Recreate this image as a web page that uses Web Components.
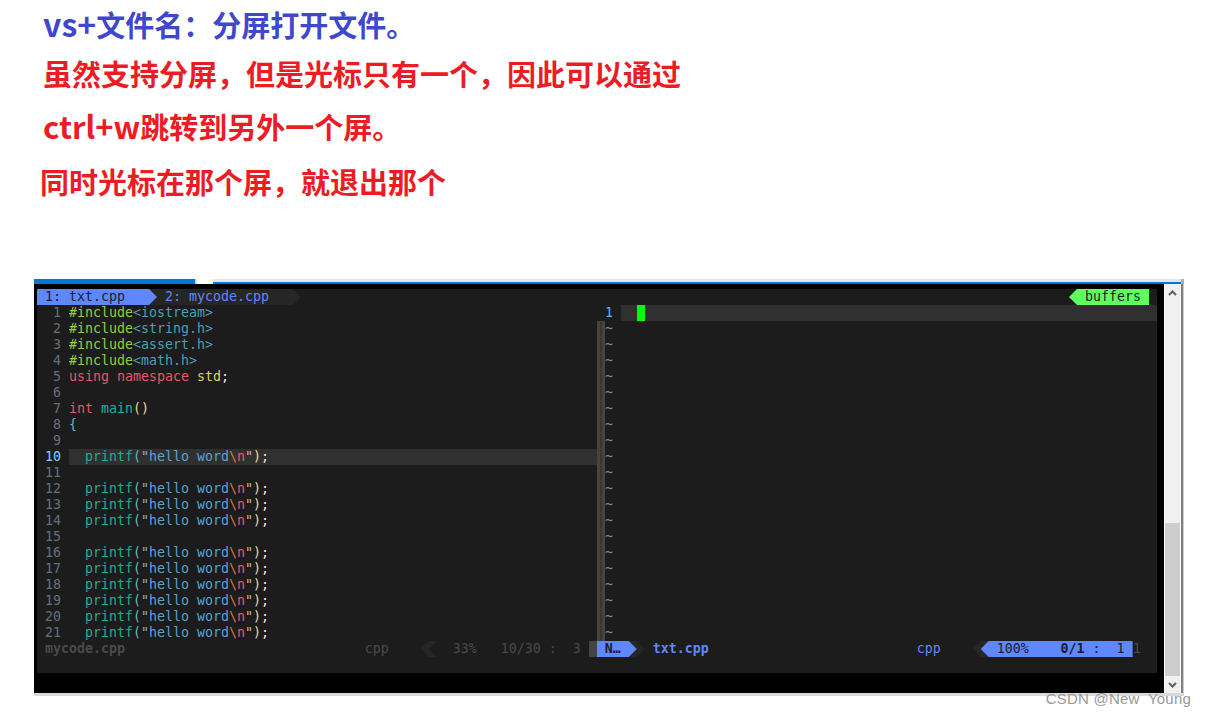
<!DOCTYPE html>
<html lang="zh">
<head>
<meta charset="utf-8">
<title>vs split</title>
<style>
  html, body { margin: 0; padding: 0; background: #fff; overflow: hidden; }
  body { height: 718px; font-family: "Noto Sans CJK SC", "Liberation Sans", sans-serif; }
  .notes { display: block; height: 279px; }
  .wide { font-size: 32px; line-height: 1; }
  .semiwide { font-size: 31px; line-height: 1; }
</style>
</head>
<body>
<div class="notes">
  <note-line tone="blue" h="46" inset="43"><span class="wide">vs+</span>文件名：分屏打开文件。</note-line>
  <note-line tone="red" h="54" inset="43">虽然支持分屏，但是光标只有一个，因此可以通过</note-line>
  <note-line tone="red" h="50" inset="43"><span class="semiwide">ctrl+w</span>跳转到另外一个屏。</note-line>
  <note-line tone="red" h="62" inset="40">同时光标在那个屏，就退出那个</note-line>
</div>
<term-window>
  <vim-tabline></vim-tabline>
  <vim-editor></vim-editor>
  <vim-status></vim-status>
</term-window>
<csdn-mark>CSDN @New  Young</csdn-mark>

<script>
class NoteLine extends HTMLElement {
  connectedCallback() {
    if (this.shadowRoot) return;
    this.attachShadow({ mode: 'open' });
    const color = this.getAttribute('tone') === 'blue' ? '#3f48cc' : '#ed1c24';
    this.shadowRoot.innerHTML = `
      <style>
        :host {
          display: flex;
          align-items: center;
          height: ${this.getAttribute('h')}px;
          padding-left: ${this.getAttribute('inset')}px;
          color: ${color};
          font: 700 29px/1 "Noto Sans CJK SC", "Liberation Sans", sans-serif;
          white-space: nowrap;
        }
      </style>
      <div><slot></slot></div>
    `;
  }
}

class WinScrollbar extends HTMLElement {
  connectedCallback() {
    if (this.shadowRoot) return;
    this.attachShadow({ mode: 'open' });
    this.shadowRoot.innerHTML = `
      <style>
        :host {
          display: flex;
          flex-direction: column;
          width: 15px;
          background: #f0f0f0;
          margin-left: 1px;
        }
        .btn { height: 17px; display: flex; align-items: center; justify-content: center; }
        .track { flex: 1; }
        .thumb { height: 153px; background: #cdcdcd; }
        svg { display: block; }
      </style>
      <div class="btn"><svg width="9" height="6" viewBox="0 0 9 6"><path d="M1 5 4.5 1.5 8 5" fill="none" stroke="#606060" stroke-width="2"/></svg></div>
      <div class="track"></div>
      <div class="thumb"></div>
      <div class="btn"><svg width="9" height="6" viewBox="0 0 9 6"><path d="M1 1 4.5 4.5 8 1" fill="none" stroke="#606060" stroke-width="2"/></svg></div>
    `;
  }
}

class TermWindow extends HTMLElement {
  connectedCallback() {
    if (this.shadowRoot) return;
    this.attachShadow({ mode: 'open' });
    this.shadowRoot.innerHTML = `
      <style>
        :host {
          display: block;
          width: 1150px;
          margin-left: 34px;
        }
        .strip { display: flex; height: 5px; }
        .strip .active { width: 161px; background: #0078d7; }
        .strip .gap { width: 2px; background: #d8d8d8; }
        .strip .tab { width: 16px; background: #fff; }
        .strip .rest { flex: 1; background: #e6e6e6; border-bottom: 2px solid #0078d7; box-sizing: border-box; }
        .strip .end { width: 3px; background: #b0b0b0; }
        .body { display: flex; height: 409px; }
        .black { width: 1130px; background: #000; padding: 5px 0 20px 3px; box-sizing: border-box; }
        .screen {
          width: 1120px;
          height: 384px;
          background: #1c1c1c;
          font: 13.29px/16px "DejaVu Sans Mono", "Liberation Mono", monospace;
          color: #d0d0d0;
        }
        .edge { width: 1px; background: #fff; }
        .frame { width: 3px; background: linear-gradient(90deg, #808080 0 2px, #cfcfcf 2px); }
        .foot { height: 3px; background: #d9d9d9; }
      </style>
      <div class="strip">
        <div class="active"></div><div class="gap"></div><div class="tab"></div><div class="rest"></div><div class="end"></div>
      </div>
      <div class="body">
        <div class="black"><div class="screen"><slot></slot></div></div>
        <win-scrollbar></win-scrollbar>
        <div class="edge"></div>
        <div class="frame"></div>
      </div>
      <div class="foot"></div>
    `;
  }
}

class VimTabline extends HTMLElement {
  connectedCallback() {
    if (this.shadowRoot) return;
    this.attachShadow({ mode: 'open' });
    this.shadowRoot.innerHTML = `
      <style>
        :host { display: flex; height: 16px; white-space: pre; }
        .on {
          width: 120px; padding-left: 8px; box-sizing: border-box;
          background: #5f87ff; color: #1c1c2e;
          clip-path: polygon(0 0, 112px 0, 100% 50%, 112px 100%, 0 100%);
          position: relative; z-index: 1;
        }
        .off {
          width: 152px; margin-left: -8px; padding-left: 16px; box-sizing: border-box;
          background: #262626; color: #5f87ff;
          clip-path: polygon(0 0, 144px 0, 100% 50%, 144px 100%, 0 100%);
        }
        .fill { flex: 1; }
        .buf {
          width: 80px; padding-left: 16px; box-sizing: border-box;
          background: #5fff5f; color: #1c1c1c;
          clip-path: polygon(8px 0, 100% 0, 100% 100%, 8px 100%, 0 50%);
        }
        .pad { width: 8px; }
      </style>
      <div class="on">1: txt.cpp</div>
      <div class="off">2: mycode.cpp</div>
      <div class="fill"></div>
      <div class="buf">buffers</div>
      <div class="pad"></div>
    `;
  }
}

const hello = `  <span class="fn">printf</span><span class="par">(</span><span class="q">"</span><span class="str">hello word</span><span class="esc">\\</span><span class="n">n</span><span class="q2">"</span><span class="par2">)</span><span class="semi">;</span>`;
const inc = (name) => `<span class="inc">#include</span><span class="hdr">&lt;${name}&gt;</span>`;

const SOURCE = [
  inc('iostream'),
  inc('string.h'),
  inc('assert.h'),
  inc('math.h'),
  `<span class="kw">using namespace</span> <span class="std">std</span><span class="semi">;</span>`,
  '',
  `<span class="kw">int</span> <span class="main">main</span><span class="par2">()</span>`,
  `<span class="par">{</span>`,
  '',
  hello,
  '',
  hello, hello, hello,
  '',
  hello, hello, hello, hello, hello, hello
];

class VimEditor extends HTMLElement {
  connectedCallback() {
    if (this.shadowRoot) return;
    this.attachShadow({ mode: 'open' });
    const left = SOURCE.map((code, i) => {
      const cur = i === 9;
      return `<div class="row ${cur ? 'cur' : ''}"><span class="num">${String(i + 1).padStart(3, ' ')}</span><span class="code">${code}</span></div>`;
    }).join('');
    const sep = Array.from({ length: 20 }, () => '<div class="sepc">|</div>').join('');
    const tildes = Array.from({ length: 20 }, () => '<div class="tilde">~</div>').join('');
    this.shadowRoot.innerHTML = `
      <style>
        :host { display: flex; height: 336px; }
        .left { width: 560px; }
        .sep { width: 8px; padding-top: 16px; }
        .right { flex: 1; }
        .row { display: flex; height: 16px; white-space: pre; }
        .num { width: 24px; flex: none; text-align: right; color: #66707a; }
        .code { flex: 1; margin-left: 8px; }
        .cur .num { color: #7fd0ff; }
        .cur .code { background: #303030; }
        .sepc { height: 16px; background: #444; color: #3a2a12; }
        .tilde { height: 16px; color: #8a8585; }
        .rnum { width: 8px; color: #5fafff; flex: none; }
        .rline { flex: 1; margin-left: 8px; background: #303030; display: flex; padding-left: 16px; }
        .cursor { width: 8px; height: 16px; background: #00ff00; }
        .inc { color: #8fcf3f; }
        .hdr { color: #4a9fb8; }
        .kw { color: #e8556a; }
        .std { color: #d7d75f; }
        .semi { color: #e4e4e4; }
        .main { color: #12b0a8; }
        .fn { color: #12b09a; }
        .par { color: #63b5c8; }
        .par2 { color: #e8d8a0; }
        .q { color: #7fb8d8; }
        .q2 { color: #e0a8b0; }
        .str { color: #5aa2d8; }
        .esc { color: #e0703c; }
        .n { color: #ee5577; }
      </style>
      <div class="left">${left}</div>
      <div class="sep">${sep}</div>
      <div class="right">
        <div class="row"><span class="rnum">1</span><div class="rline"><div class="cursor"></div></div></div>
        ${tildes}
      </div>
    `;
  }
}

class VimStatus extends HTMLElement {
  connectedCallback() {
    if (this.shadowRoot) return;
    this.attachShadow({ mode: 'open' });
    this.shadowRoot.innerHTML = `
      <style>
        :host { display: flex; height: 16px; white-space: pre; color: #4a4a4a; }
        b { font-weight: 700; }
        .chev { width: 16px; height: 16px; background: #262626; clip-path: polygon(8px 0, 16px 0, 8px 8px, 16px 16px, 8px 16px, 0 8px); }
        .block { width: 8px; background: #444; }
        .mode {
          width: 40px; padding-left: 8px; box-sizing: border-box;
          background: #5f87ff; color: #1c1c2e; font-weight: 700;
          clip-path: polygon(0 0, 32px 0, 100% 50%, 32px 100%, 0 100%);
          position: relative; z-index: 1;
        }
        .modeback {
          width: 16px; margin-left: -8px; background: #262626;
          clip-path: polygon(0 0, 8px 0, 100% 50%, 8px 100%, 0 100%);
        }
        .name { color: #5f87ff; font-weight: 700; }
        .ft { color: #5f87ff; }
        .posback {
          width: 16px; background: #262626;
          clip-path: polygon(8px 0, 100% 0, 100% 100%, 8px 100%, 0 50%);
        }
        .pos {
          width: 152px; margin-left: -8px; padding-left: 16px; box-sizing: border-box;
          background: #5f87ff; color: #1c1c2e;
          clip-path: polygon(8px 0, 100% 0, 100% 100%, 8px 100%, 0 50%);
          position: relative; z-index: 1;
        }
      </style>
      <span> <b>mycode.cpp</b>                              cpp    </span><span class="chev"></span><span>  33%   10/30 :  3 </span><span class="block"></span><span class="mode">N…</span><span class="modeback"></span><span> </span><span class="name">txt.cpp</span><span>                          </span><span class="ft">cpp</span><span>    </span><span class="posback"></span><span class="pos">100%    <b>0/1</b> :  1 </span><span>1</span>
    `;
  }
}

// sits over the bottom edge of the window, so it pulls itself up by a negative margin
class CsdnMark extends HTMLElement {
  connectedCallback() {
    if (this.shadowRoot) return;
    this.attachShadow({ mode: 'open' });
    this.shadowRoot.innerHTML = `
      <style>
        :host {
          display: flex;
          justify-content: flex-end;
          height: 18px;
          margin-top: -6px;
          padding-right: 15px;
          position: relative;
          color: #9a9a9a;
          font: 15px/18px "Liberation Sans", "Noto Sans", sans-serif;
          letter-spacing: 0.2px;
          white-space: pre;
        }
      </style>
      <div><slot></slot></div>
    `;
  }
}

customElements.define('note-line', NoteLine);
customElements.define('win-scrollbar', WinScrollbar);
customElements.define('term-window', TermWindow);
customElements.define('vim-tabline', VimTabline);
customElements.define('vim-editor', VimEditor);
customElements.define('vim-status', VimStatus);
customElements.define('csdn-mark', CsdnMark);
</script>
</body>
</html>
